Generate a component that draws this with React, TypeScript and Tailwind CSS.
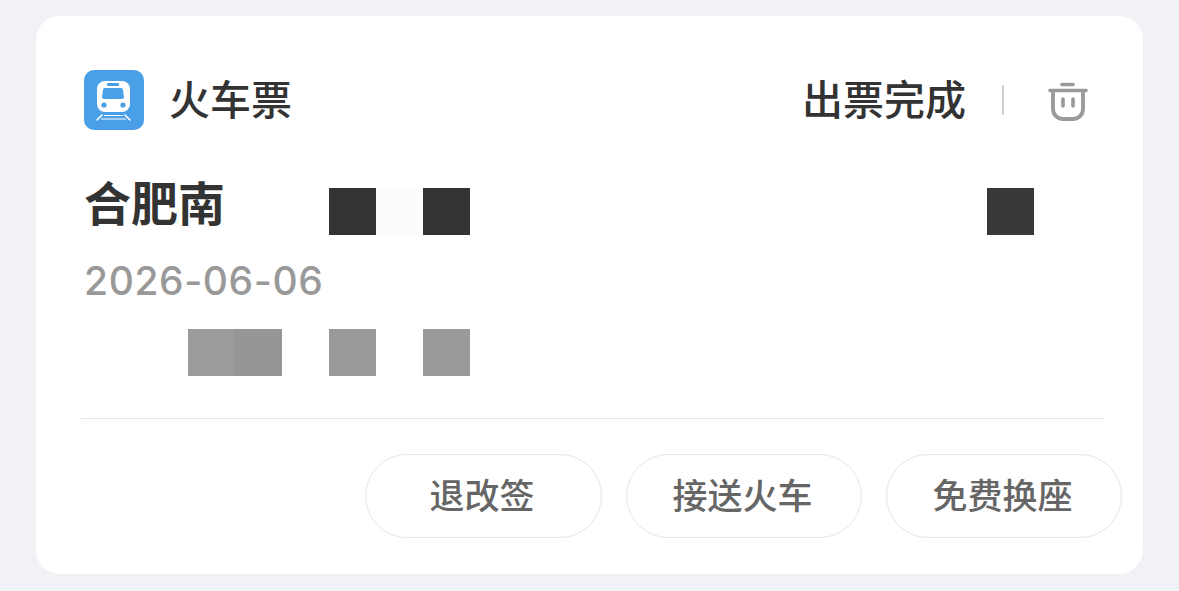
const cjk = "font-['Noto_Sans_CJK_SC','Liberation_Sans',sans-serif]";

function TrainIcon() {
  return (
    <svg viewBox="0 0 60 60" className="w-[60px] h-[60px] shrink-0">
      <rect width="60" height="60" rx="10" fill="#4aa0e6" />
      <path d="M21 11h17a8 8 0 0 1 8 8v15a8 8 0 0 1-8 8H21a8 8 0 0 1-8-8V19a8 8 0 0 1 8-8z" fill="#fff" />
      <rect x="23" y="13" width="12" height="3" rx="1" fill="#4aa0e6" />
      <path d="M21 18h16a2 2 0 0 1 2 2l1 7a2 2 0 0 1-2 2H20a2 2 0 0 1-2-2l1-7a2 2 0 0 1 2-2z" fill="#4aa0e6" />
      <circle cx="20" cy="35" r="2.6" fill="#4aa0e6" />
      <circle cx="39" cy="35" r="2.6" fill="#4aa0e6" />
      <path d="M18 45l-5 5M41 45l5 5" stroke="#fff" strokeWidth="1.6" strokeLinecap="round" />
      <path d="M20 45.5h19M17 49h25" stroke="#fff" strokeWidth="1.2" />
    </svg>
  );
}

function TrashIcon() {
  return (
    <svg viewBox="0 0 40 40" className="w-10 h-10 mt-[3px]" fill="none" stroke="#999" strokeLinecap="round" strokeLinejoin="round">
      <path d="M14 2.5h11" strokeWidth="3.6" />
      <path d="M2 8.5h36" strokeWidth="3.6" />
      <path d="M5 9v18a10 10 0 0 0 10 10h10a10 10 0 0 0 10-10V9" strokeWidth="3.8" />
      <path d="M15 17v7M25 17v7" strokeWidth="3.6" />
    </svg>
  );
}

function Action({ label, w }: { label: string; w: string }) {
  return (
    <div className={`h-[84px] ${w} rounded-full border border-[#e6e6e6] flex items-center justify-center pb-[6px] pr-[3px] text-[35px] leading-none font-medium text-[#666]`}>
      {label}
    </div>
  );
}

export default function App() {
  return (
    <div className={`w-[1179px] h-[591px] bg-[#f0f2f6] pt-4 pl-9 overflow-hidden ${cjk}`}>
      <div className="w-[1107px] h-[558px] bg-white rounded-[24px] flex flex-col">
        <div className="h-[54px] mt-[57px] flex items-center pl-12 pr-[55px]">
          <TrainIcon />
          <span className="ml-[25px] pb-[6px] text-[41px] leading-none font-medium text-[#333]">火车票</span>
          <span className="ml-auto mr-px pb-[6px] text-[41px] leading-none font-medium text-[#333]">出票完成</span>
          <div className="ml-[35px] mr-11 w-0.5 h-[30px] bg-[#cfcfcf]" />
          <TrashIcon />
        </div>
        <div className="mt-[52px] h-[64px] flex items-center pl-[48px]">
          <span className="text-[47px] leading-none font-bold text-[#333] w-[245px] pb-[22px]">合肥南</span>
          <div className="w-[47px] h-[47px] bg-[#333]" />
          <div className="w-[47px] h-[47px] bg-[#fcfcfc]" />
          <div className="w-[47px] h-[47px] bg-[#333]" />
          <div className="ml-[517px] w-[47px] h-[47px] bg-[#383838]" />
        </div>
        <div className="mt-[15px] mb-px pl-[48px] h-[44px] flex items-center text-[39px] leading-none tracking-[0.6px] font-medium text-[#999] font-['Inter',sans-serif]">
          2026-06-06
        </div>
        <div className="mt-[26px] pl-[152px] flex">
          <div className="w-[47px] h-[47px] bg-[#9b9b9b]" />
          <div className="w-[47px] h-[47px] bg-[#969696]" />
          <div className="ml-[47px] w-[47px] h-[47px] bg-[#9a9a9a]" />
          <div className="ml-[47px] w-[47px] h-[47px] bg-[#9a9a9a]" />
        </div>
        <div className="mt-[42px] ml-[45px] w-[1023px] h-px bg-[#e5e5e5]" />
        <div className="mt-[35px] pr-[21px] flex justify-end gap-6">
          <Action label="退改签" w="w-[237px]" />
          <Action label="接送火车" w="w-[236px]" />
          <Action label="免费换座" w="w-[236px]" />
        </div>
      </div>
    </div>
  );
}
